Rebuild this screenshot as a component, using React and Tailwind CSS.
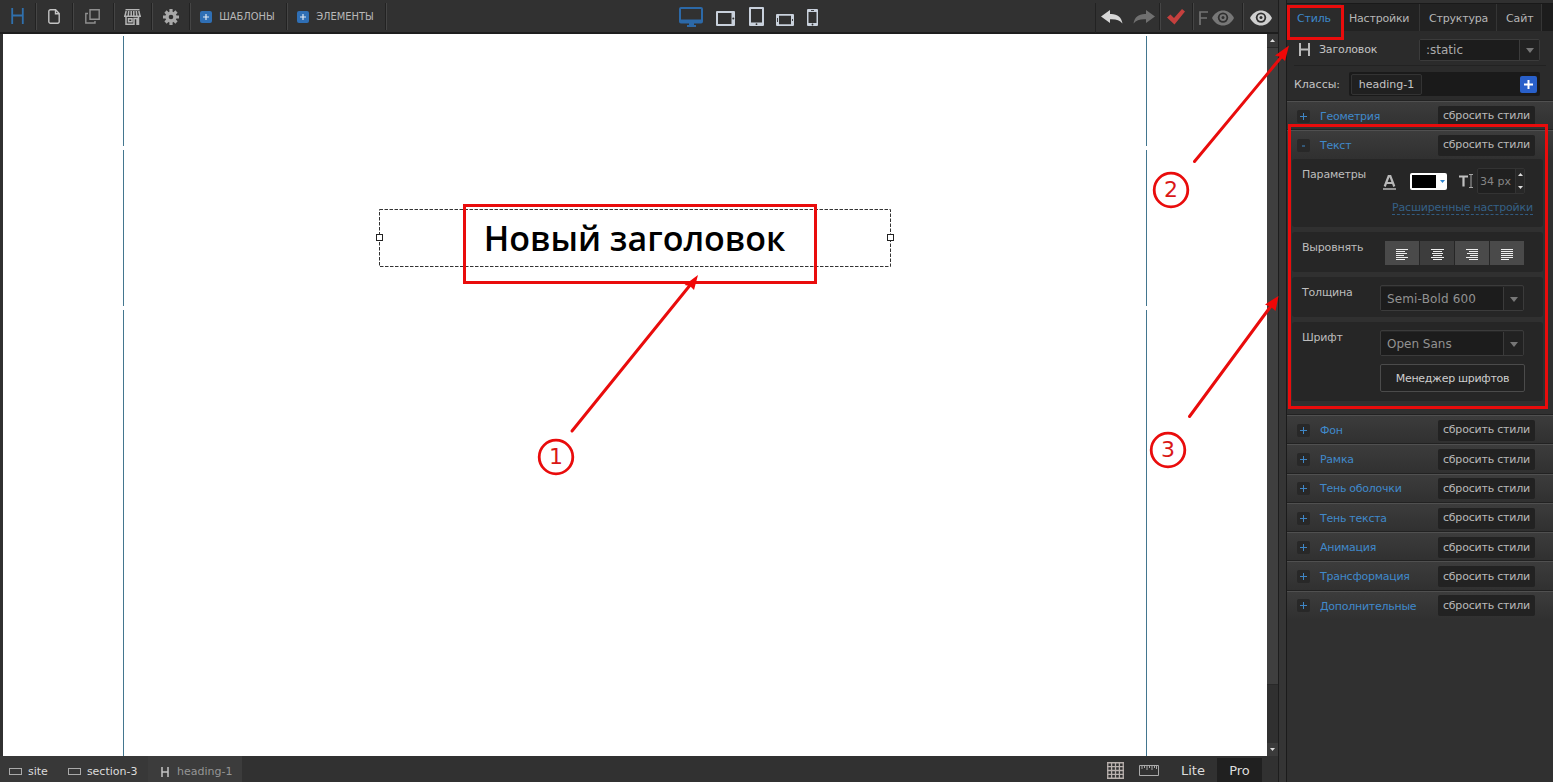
import React from 'react';

const sections = [
  { height: 'h-[110px]', heading: false },
  { height: 'h-[156px]', heading: true },
  { height: 'h-[446px]', heading: false },
];

function ToolCell({ className, children }) {
  return (
    <div className={`flex h-[27px] shrink-0 items-center justify-center border-r border-[#222] shadow-[1px_0_0_#454545] ${className}`}>
      {children}
    </div>
  );
}

function PlusBadge() {
  return (
    <svg className="size-3 shrink-0" viewBox="0 0 12 12">
      <rect width="12" height="12" rx="2" fill="#2f6fb5" />
      <path d="M3 6h6M6 3v6" stroke="#dfe8f2" strokeWidth="1.2" />
    </svg>
  );
}

function Eye({ color, className }) {
  return (
    <svg className={className} viewBox="0 0 22 16">
      <path d="M0 8C5-2 17-2 22 8C17 18 5 18 0 8Z" fill={color} />
      <circle cx="11" cy="7.6" r="5.2" fill="#303030" />
      <circle cx="11" cy="7.6" r="3.4" fill={color} />
      <circle cx="11" cy="7.6" r="1.5" fill="#303030" />
    </svg>
  );
}

function Toolbar() {
  return (
    <div className="flex h-[34px] shrink-0 items-start border-b-2 border-[#1d1d1d] bg-[#313131] pt-[3px]">
      <ToolCell className="w-9">
        <svg className="-mt-[2px] h-4 w-[13px]" viewBox="0 0 13 16">
          <path d="M1.200 0v16M11.800 0v16M1 7.5h11" stroke="#3070ad" strokeWidth="1.8" fill="none" />
        </svg>
      </ToolCell>
      <ToolCell className="w-[37px]">
        <svg className="h-[15px] w-3" viewBox="0 0 12 15">
          <path d="M2.5.8H7.6L11.2 4.600V12.700a1.500 1.500 0 0 1-1.500 1.500H2.500A1.600 1.600 0 0 1 .8 12.700V2.400A1.600 1.600 0 0 1 2.500.8ZM7.500 1v3.800H11" stroke="#c4c4c4" strokeWidth="1.4" fill="none" />
        </svg>
      </ToolCell>
      <ToolCell className="w-[41px]">
        <svg className="h-[15px] w-4" viewBox="0 0 16 15">
          <path d="M5 .8h9.200V10.200H5ZM3 4.500H.8V14H10v-2" stroke="#8f8f8f" strokeWidth="1.4" fill="none" />
        </svg>
      </ToolCell>
      <ToolCell className="w-[38px]">
        <svg className="h-4 w-[17px]" viewBox="0 0 17 16">
          <path d="M1.500.7h14" stroke="#b5b5b5" strokeWidth="1.400" />
          <path d="M2.200 2L1 7M4.700 2L4.200 7M7.200 2v5M9.800 2v5M12.300 2l.5 5M14.800 2l1.200 5" stroke="#b5b5b5" strokeWidth="1.500" />
          <path d="M0 7.200h17M2 8v7.300h8V9.500h3v5.800h1.500V8M4.500 9.700h3.500v3H4.500Z" stroke="#b5b5b5" strokeWidth="1.500" fill="none" />
        </svg>
      </ToolCell>
      <ToolCell className="w-[38px]">
        <svg className="size-4" viewBox="0 0 16 16">
          <g stroke="#a8a8a8" strokeWidth="3.200">
            <path d="M8 0v16M0 8h16M2.500 2.500l11 11M13.500 2.500l-11 11" />
          </g>
          <circle cx="8" cy="8" r="5.600" fill="#a8a8a8" />
          <circle cx="8" cy="8" r="2.300" fill="#303030" />
        </svg>
      </ToolCell>
      <ToolCell className="w-[97px] gap-[7px] pr-px text-[#b8b8b8]">
        <PlusBadge />
        <span className="pt-[2px] font-['DejaVu_Sans_Condensed','DejaVu_Sans',sans-serif] text-[11px] [font-stretch:condensed]">ШАБЛОНЫ</span>
      </ToolCell>
      <ToolCell className="w-[99px] gap-[7px] pr-px text-[#b8b8b8]">
        <PlusBadge />
        <span className="pt-[2px] font-['DejaVu_Sans_Condensed','DejaVu_Sans',sans-serif] text-[11px] [font-stretch:condensed]">ЭЛЕМЕНТЫ</span>
      </ToolCell>

      <div className="flex h-6 items-end pl-[293px]">
        <svg className="h-5 w-[26px]" viewBox="0 0 26 20">
          <path fillRule="evenodd" d="M2 0H22a2 2 0 0 1 2 2V14.500a2 2 0 0 1-2 2H15v1.500h2V20H8V18h2V16.500H2a2 2 0 0 1-2-2V2A2 2 0 0 1 2 0ZM2 2V12.500H22V2Z" fill="#2c69a8" />
        </svg>
        <svg className="ml-[11px] h-[19px] w-5" viewBox="0 0 20 19">
          <path fillRule="evenodd" d="M1 3H18a1 1 0 0 1 1 1V17a1 1 0 0 1-1 1H1a1 1 0 0 1-1-1V4A1 1 0 0 1 1 3ZM2 5V16H15.500V5Z" fill="#c9d1dc" />
          <circle cx="17.300" cy="10.500" r="1" fill="#303030" />
        </svg>
        <svg className="ml-[13px] mb-px h-5 w-[15px]" viewBox="0 0 15 20">
          <path fillRule="evenodd" d="M1 1H14a1 1 0 0 1 1 1V19a1 1 0 0 1-1 1H1a1 1 0 0 1-1-1V2A1 1 0 0 1 1 1ZM2 3V16.500H13V3Z" fill="#c9d1dc" />
          <circle cx="7.500" cy="18.200" r=".9" fill="#303030" />
        </svg>
        <svg className="ml-3 mb-px h-3 w-[18px]" viewBox="0 0 18 12">
          <path fillRule="evenodd" d="M1 0H17a1 1 0 0 1 1 1V11a1 1 0 0 1-1 1H1a1 1 0 0 1-1-1V1A1 1 0 0 1 1 0ZM3 1.700V10.300H15V1.700Z" fill="#c9d1dc" />
          <path d="M1.500 4v4M16.500 5v2" stroke="#303030" strokeWidth=".9" />
        </svg>
        <svg className="ml-[13px] mb-px h-[17px] w-[11px]" viewBox="0 0 11 17">
          <path fillRule="evenodd" d="M1 0H10a1 1 0 0 1 1 1V16a1 1 0 0 1-1 1H1a1 1 0 0 1-1-1V1A1 1 0 0 1 1 0ZM1.500 3V14H9.500V3Z" fill="#c9d1dc" />
          <path d="M4 1.500h3" stroke="#303030" strokeWidth=".9" />
          <circle cx="5.500" cy="15.500" r=".9" fill="#303030" />
        </svg>
      </div>

      <div className="ml-auto flex border-l border-[#222]">
        <ToolCell className="w-[64px] gap-[10px]">
          <svg className="h-[14px] w-[22px]" viewBox="0 0 22 14">
            <path d="M0 6.500L9 0V4C16 3.500 20.500 7 21.500 13.500C18.500 10 15 9 9 9.300V13Z" fill="#d6d6d6" />
          </svg>
          <svg className="h-[14px] w-[22px]" viewBox="0 0 22 14">
            <path d="M22 6.500L13 0V4C6 3.500 1.500 7 .5 13.500C3.500 10 7 9 13 9.300V13Z" fill="#707070" />
          </svg>
        </ToolCell>
        <ToolCell className="w-[33px]">
          <svg className="h-4 w-[18px]" viewBox="0 0 18 16">
            <path d="M0 8.500L3.500 5.500L7 9L15 0L18 2.500L7.500 15.500Z" fill="#c5403e" />
          </svg>
        </ToolCell>
        <ToolCell className="w-[50px] gap-1 pr-0.5">
          <svg className="mt-0.5 h-[14px] w-[9px]" viewBox="0 0 9 14">
            <path d="M1 14V1H9M1 7H8" stroke="#737373" strokeWidth="1.700" fill="none" />
          </svg>
          <Eye color="#777" className="mt-0.5 h-4 w-[22px]" />
        </ToolCell>
        <div className="flex h-[30px] w-[35px] items-center justify-center">
          <Eye color="#cfcfcf" className="h-4 w-[22px]" />
        </div>
      </div>
    </div>
  );
}

function Canvas() {
  return (
    <div className="flex h-[722px] shrink-0 bg-[#313131] pl-[3px]">
      <div className="flex w-[1264px] flex-col gap-1 bg-white pt-0.5">
        {sections.map((s, i) => (
          <div key={i} className={`ml-[120px] flex w-[1024px] shrink-0 justify-center border-x border-[#43768f] ${s.height}`}>
            {s.heading && (
              <div className="relative mt-[59px] mr-px h-[58px] w-[512px]">
                <svg className="absolute inset-0 h-[58px] w-[512px]" viewBox="0 0 512 58">
                  <rect x=".5" y=".5" width="511" height="57" fill="none" stroke="#333" strokeDasharray="3.500 1.500" />
                </svg>
                <div className="absolute top-[25px] -left-[3px] size-[7px] border border-[#222] bg-white" />
                <div className="absolute top-[25px] -right-[3px] size-[7px] border border-[#222] bg-white" />
                <h1 className="text-center font-['Open_Sans','Noto_Sans',sans-serif] text-[34px] leading-[58px] font-semibold whitespace-nowrap text-black">Новый заголовок</h1>
              </div>
            )}
          </div>
        ))}
      </div>
      <div className="flex w-[11px] flex-col bg-[#303030]">
        <div className="flex h-[14px] items-center justify-center border-b border-[#292929] bg-[#383838]">
          <svg className="h-[3px] w-[5px]" viewBox="0 0 5 3"><path d="M0 3L2.500 0L5 3Z" fill="#ddd" /></svg>
        </div>
        <div className="h-[637px] border-b border-[#292929] bg-[#3f3f3f]" />
        <div className="mt-auto flex h-[13px] items-center justify-center bg-[#3b3b3b]">
          <svg className="h-[3px] w-[5px]" viewBox="0 0 5 3"><path d="M0 0L2.500 3L5 0Z" fill="#ddd" /></svg>
        </div>
      </div>
    </div>
  );
}

function StatusBar() {
  return (
    <div className="flex h-[26px] shrink-0 items-center bg-[#313131] text-[11px] text-[#dcdcdc]">
      <div className="flex h-full w-[148px] items-center bg-[#383838] pt-[6px] pl-[9px]">
        <div className="-mt-px h-[7px] w-[13px] border border-[#aaa]" />
        <span className="ml-[6px] pt-px">site</span>
        <div className="-mt-px ml-[20px] h-[7px] w-[13px] border border-[#aaa]" />
        <span className="ml-[6px] pt-px">section-3</span>
      </div>
      <div className="flex h-full w-[94px] items-center bg-[#3c3c3c] pt-[6px] pl-[13px] text-[#959595]">
        <svg className="h-[10px] w-2" viewBox="0 0 8 10"><path d="M1 0v10M7 0v10M1 5h6" stroke="#c4c4c4" strokeWidth="1.500" /></svg>
        <span className="ml-2 pt-px">heading-1</span>
      </div>
      <div className="ml-auto flex h-full items-center pr-4 text-[13px] text-[#dcdcdc]">
        <svg className="mt-[3px] size-[17px]" viewBox="0 0 17 17">
          <path d="M.75 0v17M4.600 0v17M8.500 0v17M12.400 0v17M16.250 0v17M0 .75h17M0 4.600h17M0 8.500h17M0 12.400h17M0 16.250h17" stroke="#b9b1ae" strokeWidth="1.300" />
        </svg>
        <svg className="mt-[3px] ml-[15px] h-[11px] w-5" viewBox="0 0 20 11">
          <path d="M.5.5h19v10H.5ZM3 1v3M5.500 1v2M8 1v4M10.500 1v2M13 1v4M15.500 1v2M17.500 1v3" stroke="#aaa" fill="none" />
        </svg>
        <span className="ml-[22px] w-[36px] pt-[3px]">Lite</span>
        <span className="mt-0.5 flex h-6 w-[45px] items-center justify-center bg-[#202020] pt-px">Pro</span>
      </div>
    </div>
  );
}

function ResetButton() {
  return <button className="h-[21px] w-[97px] shrink-0 rounded-[2px] bg-[#222] pt-px text-[11px] tracking-[-0.200px] whitespace-nowrap text-[#b9b9b9]">сбросить стили</button>;
}

function AccordionHeader({ title, open, height = 'h-[29.300px]' }) {
  return (
    <div className={`flex shrink-0 items-center border-t border-[#505050] bg-linear-to-b from-[#3c3c3c] to-[#303030] pr-[18px] pl-[10px] shadow-[0_-1px_0_#222] ${height}`}>
      <span className="flex size-[13px] items-center justify-center rounded-[2px] bg-[#282828]">
        <svg className="size-[7px]" viewBox="0 0 7 7">
          <path d={open ? 'M2 4h3' : 'M0 3.500h7M3.500 0v7'} stroke="#3f86c5" />
        </svg>
      </span>
      <span className="mr-auto ml-[10px] pt-[2px] tracking-[-0.260px] text-[#4089cb]">{title}</span>
      <ResetButton />
    </div>
  );
}

function Arrow() {
  return <svg className="mt-0.5 h-[5px] w-2" viewBox="0 0 8 5"><path d="M0 0L4 5L8 0Z" fill="#777" /></svg>;
}

function Dropdown({ value, className }) {
  return (
    <div className={`flex rounded-[2px] border border-[#3b3b3b] ${className}`}>
      <div className="flex flex-1 items-center border-r border-[#3b3b3b] bg-[#1c1c1c] pl-[6px]">{value}</div>
      <div className="flex w-[19px] items-center justify-center bg-[#222]"><Arrow /></div>
    </div>
  );
}

function Card({ label, className, children }) {
  return (
    <div className={`flex shrink-0 rounded-[3px] bg-[#262626] pl-[10px] ${className}`}>
      <span className="w-[78px] shrink-0 pt-[9px] leading-[14px] tracking-[-0.200px] text-[#bdbdbd]">{label}</span>
      {children}
    </div>
  );
}

const alignments = [
  { bg: 'bg-[#4a4a4a]', rows: [[0, 12], [0, 9], [0, 11], [0, 8], [0, 12], [0, 9]] },
  { bg: 'bg-[#3d3d3d]', rows: [[0, 13], [2, 9], [1, 11], [2, 9], [0, 13], [2, 9]] },
  { bg: 'bg-[#4a4a4a]', rows: [[0, 12], [3, 9], [1, 11], [4, 8], [0, 12], [3, 9]] },
  { bg: 'bg-[#4a4a4a]', rows: [[0, 12], [0, 12], [0, 12], [0, 12], [0, 12], [0, 8]] },
];

function TextPanel() {
  return (
    <div className="flex h-[256px] shrink-0 flex-col gap-[5px] bg-[#303030] pr-[10px] pl-[5px]">
      <Card label="Параметры" className="h-[68px]">
        <div className="flex flex-1 flex-col">
          <div className="flex h-[42px] items-center pt-[2px] pl-[3px]">
            <svg className="mt-0.5 h-[15px] w-[13px]" viewBox="0 0 13 15">
              <path d="M1.700 11.500L5.700 1h1.600L11.300 11.500M3.500 8h6" stroke="#b8b8b8" strokeWidth="2.200" fill="none" />
              <path d="M0 14h13" stroke="#b8b8b8" strokeWidth="1.500" />
            </svg>
            <div className="ml-[14px] flex h-[17px] w-[37px] items-center rounded-[2px] bg-white pl-0.5">
              <div className="h-[13px] w-6 bg-black" />
              <svg className="ml-1 h-[3px] w-[5px]" viewBox="0 0 5 3"><path d="M0 0L2.500 3L5 0Z" fill="#3187d0" /></svg>
            </div>
            <svg className="ml-3 h-[14px] w-[14px]" viewBox="0 0 14 14">
              <path d="M0 2.500h9M4.500 2.500V12.500" stroke="#c0c0c0" strokeWidth="2.200" />
              <path d="M10 .5h4M12 .5v13M10 13.500h4" stroke="#a5a5a5" />
            </svg>
            <div className="ml-[4px] flex h-[26px] w-[48px] rounded-[2px] border border-[#333] bg-[#202020] text-[#858585]">
              <span className="flex w-[37px] items-center pt-[3px] pl-[2px] whitespace-nowrap">34 px</span>
              <span className="flex flex-1 flex-col items-center justify-between border-l border-[#333] bg-[#272727] py-1">
                <svg className="h-[3px] w-[5px]" viewBox="0 0 5 3"><path d="M0 3L2.500 0L5 3Z" fill="#ddd" /></svg>
                <svg className="h-[3px] w-[5px]" viewBox="0 0 5 3"><path d="M0 0L2.500 3L5 0Z" fill="#ddd" /></svg>
              </span>
            </div>
          </div>
          <span className="ml-[12px] self-start border-b border-dashed border-[#315b80] leading-[13px] tracking-[-0.180px] whitespace-nowrap text-[#356187]">Расширенные настройки</span>
        </div>
      </Card>
      <Card label="Выровнять" className="h-[40px]">
        <div className="mt-[9px] ml-[5px] flex h-6 gap-px">
          {alignments.map((a, i) => (
            <span key={i} className={`flex w-[34px] items-center justify-center pt-[3px] ${a.bg}`}>
              <svg className="h-[11px] w-[13px]" viewBox="0 0 13 11" shapeRendering="crispEdges">
                {a.rows.map(([x, w], y) => (
                  <rect key={y} x={x} y={y * 2} width={w} height="1" fill="#eee" />
                ))}
              </svg>
            </span>
          ))}
        </div>
      </Card>
      <Card label="Толщина" className="h-[40px]">
        <Dropdown value="Semi-Bold 600" className="mt-[8px] h-[26px] w-[144px] pt-px text-[12px] tracking-[0.140px] text-[#929292]" />
      </Card>
      <Card label="Шрифт" className="h-[79px]">
        <div className="flex flex-col">
          <Dropdown value="Open Sans" className="mt-[8px] h-[26px] w-[144px] pt-px text-[12px] text-[#929292]" />
          <button className="mt-2 h-7 w-[145px] rounded-[2px] border border-[#4b4b4b] bg-[#222] pt-[3px] tracking-[-0.300px] text-[#cecece]">Менеджер шрифтов</button>
        </div>
      </Card>
    </div>
  );
}

function Sidebar() {
  return (
    <div className="flex w-[267px] shrink-0 flex-col border-l border-[#1b1b1b] bg-[#303030] text-[11px]">
      <div className="mt-[3px] flex h-7 shrink-0 border-t border-[#191919] bg-[#1c1c1c] text-[#b6b6b6]">
        <span className="flex w-[54px] items-center bg-[#2b2b2b] pt-[4px] pl-[10px] tracking-[-0.200px] text-[#3d88ca]">Стиль</span>
        <span className="flex w-[79px] items-center border-r border-[#353535] bg-[#222] pt-[4px] pl-2 tracking-[-0.200px]">Настройки</span>
        <span className="flex w-[77px] items-center border-r border-[#353535] bg-[#222] pt-[4px] pl-[9px] tracking-[-0.200px]">Структура</span>
        <span className="flex w-[45px] items-center border-r border-[#353535] bg-[#222] pt-[4px] pl-[9px] tracking-[-0.100px]">Сайт</span>
      </div>
      <div className="flex h-[70px] shrink-0 flex-col bg-[#2b2b2b] px-[7px]">
        <div className="flex h-[35px] shrink-0 items-center border-b border-[#222] pt-[3px] pl-[5px] text-[#c4c4c4]">
          <svg className="h-[13px] w-[11px]" viewBox="0 0 11 13"><path d="M1 0v13M10 0v13M1 6.500h9" stroke="#bbb" strokeWidth="2" /></svg>
          <span className="ml-[9px] w-[100px] pt-px tracking-[-0.200px]">Заголовок</span>
          <Dropdown value=":static" className="h-[22px] w-[121px] text-[12px] text-[#aaa]" />
        </div>
        <div className="flex h-[35px] items-center pt-px text-[#c4c4c4]">
          <span className="w-[55px] pt-[3px]">Классы:</span>
          <div className="flex h-6 w-[191px] items-center justify-between rounded-[2px] bg-[#1a1a1a] pr-[3px] pl-[2px]">
            <span className="flex h-[21px] w-[71px] items-center justify-center rounded-[2px] border border-[#333] bg-[#202020] pt-[3px] whitespace-nowrap">heading-1</span>
            <span className="flex size-[17px] items-center justify-center rounded-[2px] bg-[#2960ca]">
              <svg className="size-[9px]" viewBox="0 0 9 9"><path d="M0 4.500h9M4.500 0v9" stroke="#fff" strokeWidth="2" /></svg>
            </span>
          </div>
        </div>
      </div>
      <AccordionHeader title="Геометрия" height="h-[29px]" />
      <AccordionHeader title="Текст" open height="h-[29px]" />
      <TextPanel />
      {['Фон', 'Рамка', 'Тень оболочки', 'Тень текста', 'Анимация', 'Трансформация', 'Дополнительные'].map((t) => (
        <AccordionHeader key={t} title={t} />
      ))}
    </div>
  );
}

function Annotations() {
  return (
    <svg className="pointer-events-none absolute inset-0 h-[782px] w-[1553px]" viewBox="0 0 1553 782">
      <g fill="none" stroke="#e90c0c" strokeWidth="3">
        <rect x="464.500" y="205.500" width="351" height="77" />
        <rect x="1288.500" y="6.500" width="54" height="32" />
        <rect x="1289.500" y="125.500" width="257" height="282" />
        <g strokeLinecap="round">
          <path d="M572 431L691 284" />
          <path d="M1194.500 161.500L1283 55" />
          <path d="M1189.500 416.500L1271 306" />
        </g>
        <g strokeWidth="2.800">
          <circle cx="556" cy="457" r="16.800" />
          <circle cx="1171" cy="190" r="16.800" />
          <circle cx="1168" cy="450" r="16.800" />
        </g>
      </g>
      <g fill="#f10707">
        <path d="M698 275L694 290L690 286L684.500 285Z" />
        <path d="M1289 45.500L1285 61L1280.500 57L1275 55.500Z" />
        <path d="M1278.500 296L1275.500 311L1271 307L1265 304.500Z" />
      </g>
      <g fill="#d91717" fontSize="22" textAnchor="middle" fontFamily="DejaVu Sans, sans-serif">
        <text x="556" y="464">1</text>
        <text x="1171" y="197">2</text>
        <text x="1168" y="457">3</text>
      </g>
    </svg>
  );
}

export default function App() {
  return (
    <div className="relative flex h-[782px] w-[1553px] overflow-hidden bg-[#303030] font-['DejaVu_Sans',sans-serif]">
      <div className="flex w-[1279px] shrink-0 flex-col border-r border-[#1d1d1d]">
        <Toolbar />
        <Canvas />
        <StatusBar />
      </div>
      <div className="w-[7px] shrink-0 bg-[#353535]" />
      <Sidebar />
      <Annotations />
    </div>
  );
}
